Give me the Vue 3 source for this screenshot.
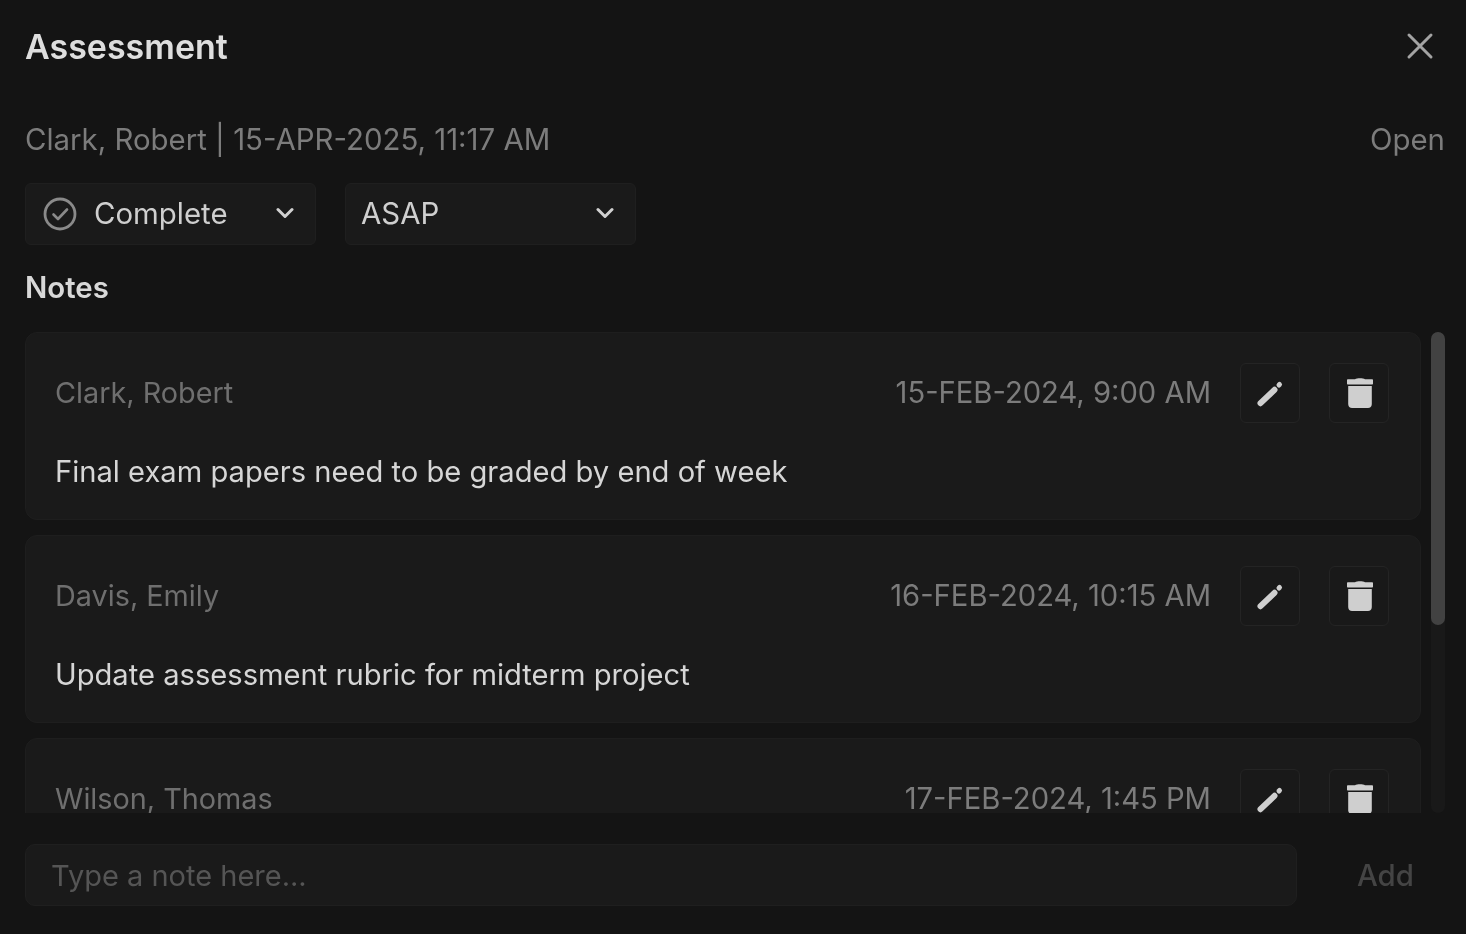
<script setup>
const notes = [
  { author: 'Clark, Robert', date: '15-FEB-2024, 9:00 AM', text: 'Final exam papers need to be graded by end of week' },
  { author: 'Davis, Emily', date: '16-FEB-2024, 10:15 AM', text: 'Update assessment rubric for midterm project' },
  { author: 'Wilson, Thomas', date: '17-FEB-2024, 1:45 PM', text: '' },
]
</script>

<template>
  <div class="panel">
    <header class="panel__head">
      <h1 class="panel__title">Assessment</h1>
      <svg class="panel__close" width="28" height="28" viewBox="0 0 28 28" fill="none">
        <path d="M3 3L25 25M25 3L3 25" stroke="#a3a3a3" stroke-width="3" stroke-linecap="round" />
      </svg>
    </header>

    <div class="panel__meta">
      <span>Clark, Robert | 15-APR-2025, 11:17 AM</span>
      <span>Open</span>
    </div>

    <div class="panel__selects">
      <div class="select">
        <svg class="select__status" width="34" height="34" viewBox="0 0 34 34" fill="none">
          <circle cx="17" cy="17" r="15" stroke="#8a8a8a" stroke-width="2.8" />
          <path d="M10.5 17.5L15 22L24 12.5" stroke="#8a8a8a" stroke-width="2.6" stroke-linecap="round" stroke-linejoin="round" />
        </svg>
        <span class="select__label">Complete</span>
        <svg class="select__chevron" width="18" height="12" viewBox="0 0 18 12" fill="none">
          <path d="M2 2.5L9 9.5L16 2.5" stroke="#d0d0d0" stroke-width="3" stroke-linecap="round" stroke-linejoin="round" />
        </svg>
      </div>
      <div class="select">
        <span class="select__label">ASAP</span>
        <svg class="select__chevron" width="18" height="12" viewBox="0 0 18 12" fill="none">
          <path d="M2 2.5L9 9.5L16 2.5" stroke="#d0d0d0" stroke-width="3" stroke-linecap="round" stroke-linejoin="round" />
        </svg>
      </div>
    </div>

    <h2 class="panel__subtitle">Notes</h2>

    <div class="notes">
      <div class="notes__list">
        <article v-for="note in notes" :key="note.author" class="note">
          <div class="note__top">
            <span class="note__author">{{ note.author }}</span>
            <span class="note__date">{{ note.date }}</span>
            <button class="note__btn" type="button">
              <svg width="28" height="28" viewBox="0 0 28 28" fill="none">
                <path d="M3.5 24.2L17.5 10.8" stroke="#cfcfcf" stroke-width="6" stroke-linecap="round" />
                <path d="M22 6L22.5 5.5" stroke="#cfcfcf" stroke-width="5" stroke-linecap="round" />
              </svg>
            </button>
            <button class="note__btn" type="button">
              <svg width="28" height="32" viewBox="0 0 28 32" fill="none">
                <path d="M1 3.2C1 2.6 1.4 2.2 2 2.2H9C11 0.8 17 0.8 19 2.2H26C26.6 2.2 27 2.6 27 3.2V6.4C27 7 26.6 7.4 26 7.4H2C1.4 7.4 1 7 1 6.4Z" fill="#cfcfcf" />
                <path d="M2.2 9H25.8V27C25.8 29.4 24.2 31 22 31H6C3.8 31 2.2 29.4 2.2 27Z" fill="#cfcfcf" />
              </svg>
            </button>
          </div>
          <p class="note__text">{{ note.text }}</p>
        </article>
      </div>
      <div class="notes__track">
        <div class="notes__thumb"></div>
      </div>
    </div>

    <div class="composer">
      <input class="composer__input" type="text" placeholder="Type a note here..." />
      <span class="composer__add">Add</span>
    </div>
  </div>
</template>

<style>
html,
body {
  margin: 0;
  background: #141414;
}
</style>

<style scoped>
.panel {
  box-sizing: border-box;
  width: 1466px;
  height: 934px;
  overflow: hidden;
  padding: 0 21px 0 25px;
  background: #141414;
  font-family: Inter, "Liberation Sans", sans-serif;
  font-size: 29.4px;
  color: #d4d4d4;
  filter: blur(0.6px);
}

.panel__head {
  display: flex;
  align-items: center;
  justify-content: space-between;
  height: 92px;
  padding-right: 11px;
}

.panel__title {
  margin: 0;
  font-size: 34px;
  font-weight: 600;
  color: #dedede;
}

.panel__meta {
  display: flex;
  justify-content: space-between;
  align-items: center;
  height: 36px;
  margin-top: 29px;
  color: #7c7c7c;
}

.panel__selects {
  display: flex;
  gap: 29px;
  margin-top: 26px;
}

.select {
  box-sizing: border-box;
  display: flex;
  align-items: center;
  width: 291px;
  height: 62px;
  padding: 0 21px 2px 15px;
  background: #1a1a1a;
  border: 1px solid #1f1f1f;
  border-radius: 6px;
  color: #cfcfcf;
}

.select__status {
  margin: 2px 17px 0 2px;
}

.select__label {
  flex: 1;
}

.panel__subtitle {
  margin: 25px 0 26px;
  font-size: 29.4px;
  font-weight: 600;
  line-height: 36px;
  color: #d8d8d8;
}

.notes {
  display: flex;
  gap: 10px;
  height: 481px;
  overflow: hidden;
}

.notes__list {
  flex: 1;
  display: flex;
  flex-direction: column;
  gap: 15px;
}

.note {
  box-sizing: border-box;
  flex: none;
  height: 188px;
  padding: 30px 31px 30px 29px;
  background: #1a1a1a;
  border: 1px solid #1e1e1e;
  border-radius: 12px;
}

.note__top {
  display: flex;
  align-items: center;
  height: 60px;
}

.note__author {
  flex: 1;
  margin-bottom: 2px;
  font-size: 28.8px;
  color: #6f6f6f;
}

.note__date {
  margin: 0 0 2px;
  font-size: 29.2px;
  color: #7c7c7c;
}

.note__btn {
  display: flex;
  align-items: center;
  justify-content: center;
  box-sizing: border-box;
  width: 60px;
  height: 60px;
  margin-left: 29px;
  padding: 0 0 0 2px;
  background: #191919;
  border: 1px solid #242424;
  border-radius: 6px;
}

.note__text {
  margin: 31px 0 0;
  font-size: 29.15px;
  line-height: 36px;
  color: #d6d6d6;
}

.notes__track {
  flex: none;
  width: 14px;
  height: 481px;
  border-radius: 7px;
  background: #191919;
}

.notes__thumb {
  height: 293px;
  border-radius: 7px;
  background: #424242;
}

.composer {
  display: flex;
  align-items: center;
  margin-top: 31px;
}

.composer__input {
  box-sizing: border-box;
  width: 1272px;
  height: 62px;
  padding: 0 25px;
  background: #1a1a1a;
  border: 1px solid #1f1f1f;
  border-radius: 10px;
  outline: none;
  font: inherit;
  font-size: 29px;
  color: #d0d0d0;
}

.composer__input::placeholder {
  color: #555;
  opacity: 1;
}

.composer__add {
  margin-left: 60px;
  font-weight: 500;
  color: #444;
}
</style>
